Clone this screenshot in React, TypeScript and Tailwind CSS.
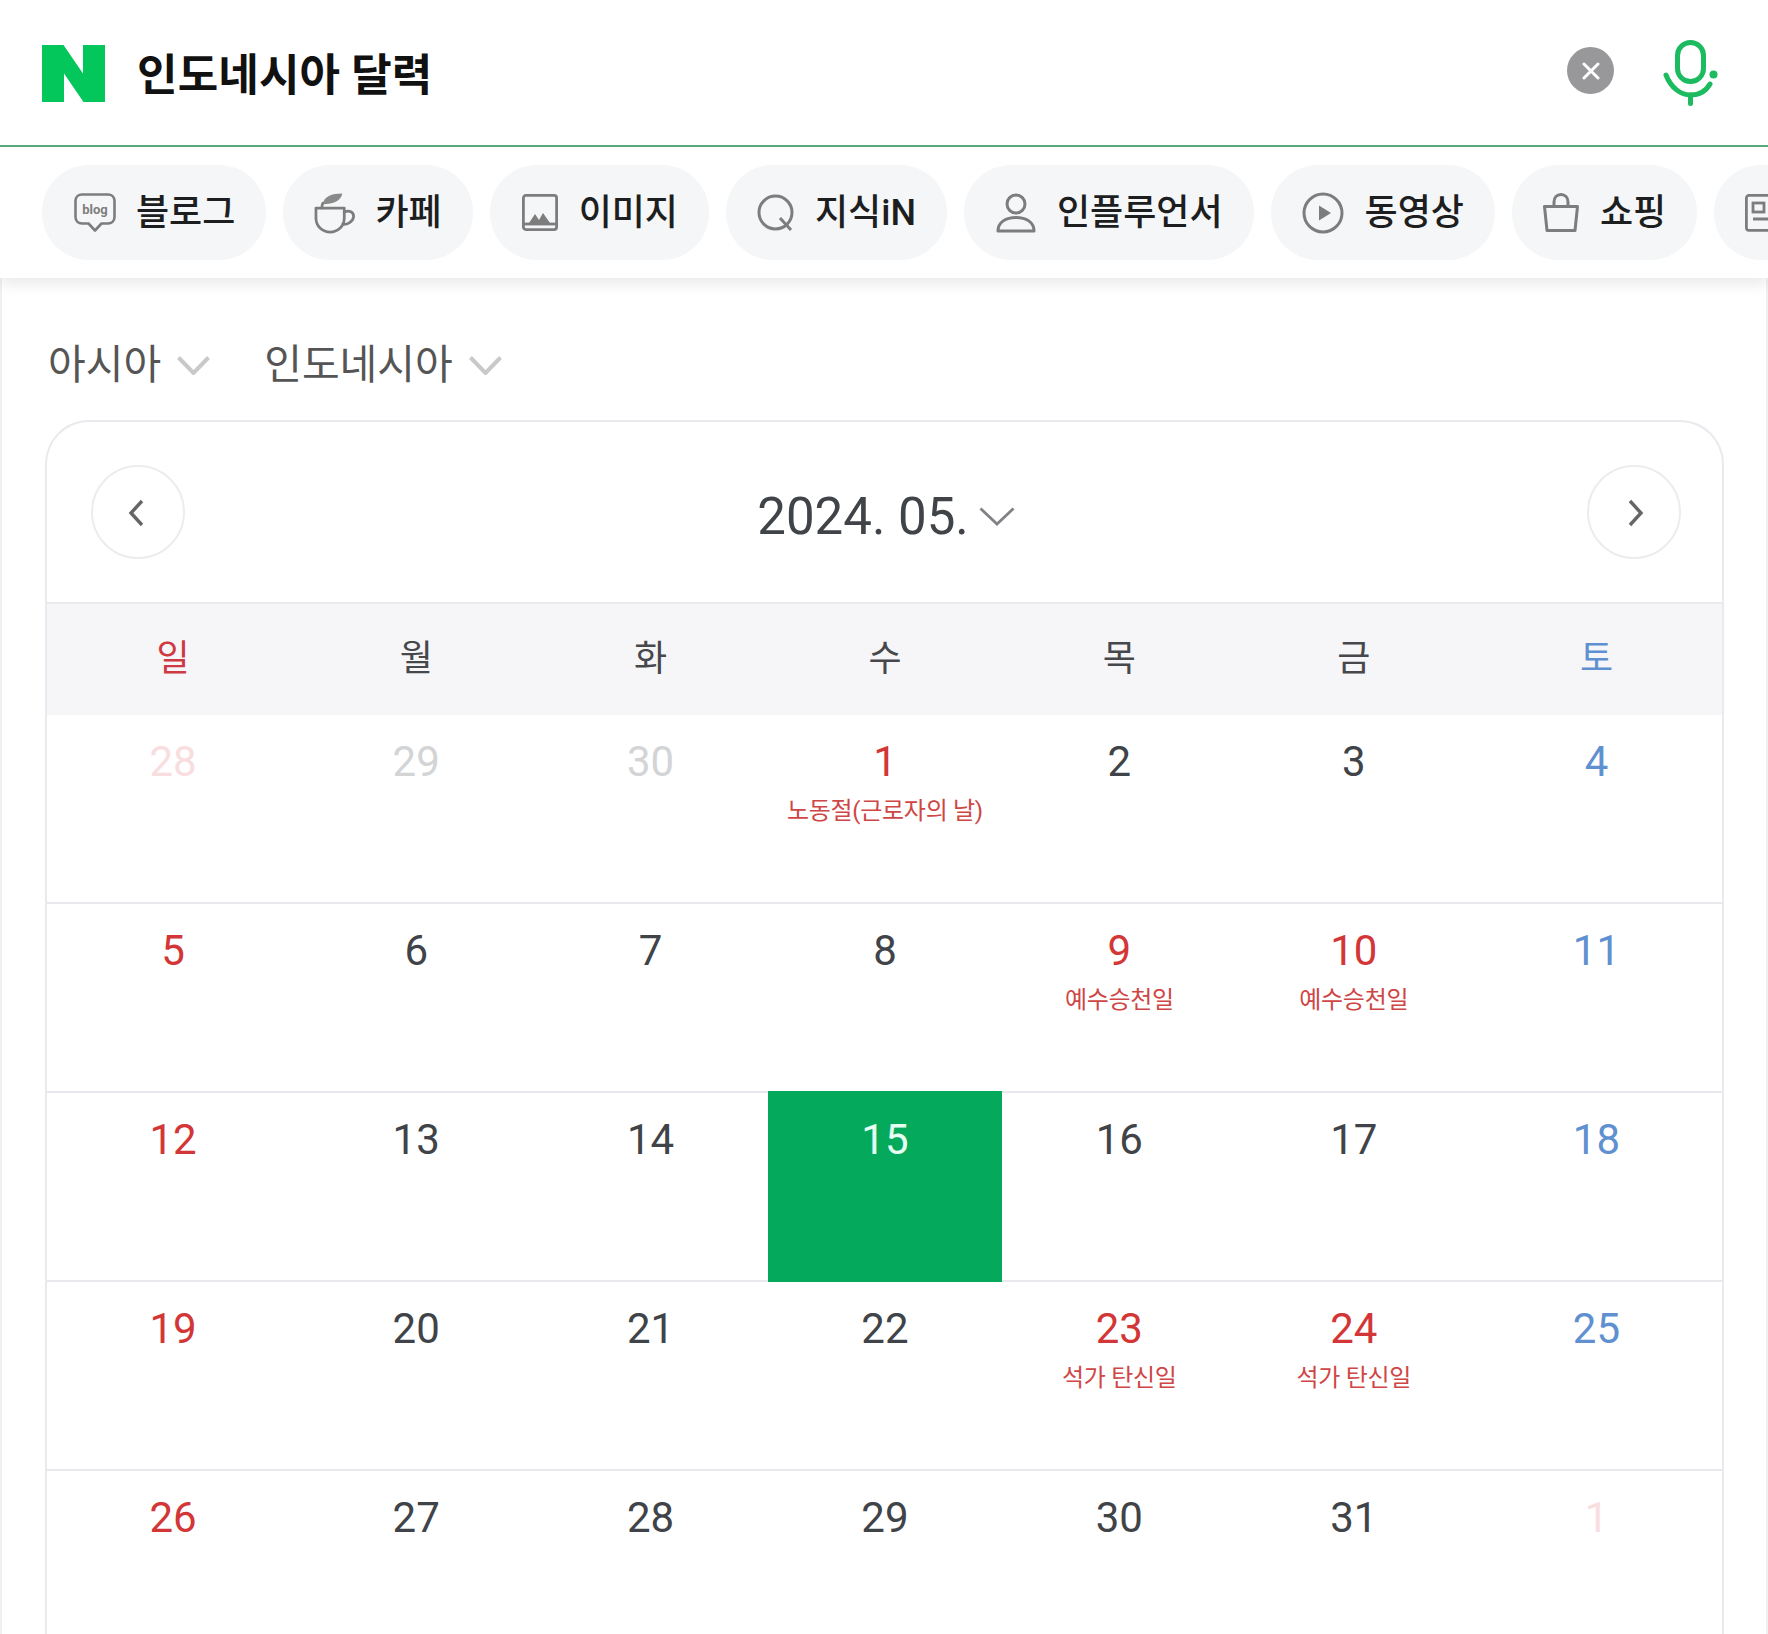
import { ReactNode } from 'react'

const iconGray = '#7d7d7d'

function BlogIcon() {
  return (
    <svg width="42" height="39" viewBox="0 0 42 39" fill="none" stroke={iconGray} strokeWidth="2.6" strokeLinejoin="round">
      <path d="M8 1.5H34C37.5 1.5 40.5 4 40.5 8V24C40.5 28 37.5 30.5 34 30.5H27.5L21 37.5L14.5 30.5H8C4.5 30.5 1.5 28 1.5 24V8C1.5 4 4.5 1.5 8 1.5Z" />
      <text x="21" y="20.5" textAnchor="middle" fontSize="13" fontWeight="700" fill={iconGray} stroke="none" fontFamily="Roboto, sans-serif">blog</text>
    </svg>
  )
}

function CafeIcon() {
  return (
    <svg width="42" height="42" viewBox="0 0 42 42" fill="none" stroke={iconGray} strokeWidth="2.8" strokeLinecap="round">
      <path d="M9 12C10 4 18 1 29 1C28 8 20 12 9 12Z" fill="#8a8a8a" stroke="none" />
      <path d="M9 11C8 13 8 14 8 16" />
      <path d="M2 16H31V26C31 35 24 40.5 16.5 40.5C9 40.5 2 35 2 26Z" strokeLinejoin="round" />
      <path d="M31 20C36 17.5 41 20 40.5 25C40 30 34 33 29.5 32.5" />
    </svg>
  )
}

function ImageIcon() {
  return (
    <svg width="36" height="37" viewBox="0 0 36 37" fill="none" stroke={iconGray} strokeWidth="2.8" strokeLinejoin="round">
      <rect x="1.4" y="1.4" width="33.2" height="34.2" rx="2.5" />
      <path d="M2 30H34" />
      <path d="M7 29L13 20L17 26L21 19L28 29Z" fill={iconGray} stroke="none" />
    </svg>
  )
}

function KinIcon() {
  return (
    <svg width="38" height="38" viewBox="0 0 38 38" fill="none" stroke={iconGray} strokeWidth="3">
      <circle cx="18.5" cy="18.5" r="16.5" />
      <path d="M23 24L34 36" />
    </svg>
  )
}

function PersonIcon() {
  return (
    <svg width="40" height="40" viewBox="0 0 40 40" fill="none" stroke={iconGray} strokeWidth="3" strokeLinejoin="round">
      <circle cx="20" cy="11" r="9" />
      <path d="M2 38C2 29 10 24.5 20 24.5C30 24.5 38 29 38 38Z" />
    </svg>
  )
}

function PlayIcon() {
  return (
    <svg width="42" height="42" viewBox="0 0 42 42" fill="none" stroke={iconGray} strokeWidth="3">
      <circle cx="21" cy="21" r="19" />
      <path d="M17 13.5L29 21L17 28.5Z" fill={iconGray} stroke="none" />
    </svg>
  )
}

function BagIcon() {
  return (
    <svg width="36" height="39" viewBox="0 0 36 39" fill="none" stroke={iconGray} strokeWidth="3" strokeLinejoin="round">
      <path d="M1.5 13.5H34.5L32 37.5H4Z" />
      <path d="M11 13V9C11 4.5 14 1.5 18 1.5C22 1.5 25 4.5 25 9V13" />
    </svg>
  )
}

function NewsIcon() {
  return (
    <svg width="42" height="38" viewBox="0 0 42 38" fill="none" stroke={iconGray} strokeWidth="2.8">
      <rect x="1.4" y="1.4" width="39" height="35" rx="2.5" />
      <rect x="8" y="9" width="11" height="9" />
      <path d="M25 10H35M25 17H35M8 25H35" />
    </svg>
  )
}

// icon box widths differ per chip in the original, hence the explicit classes
const chips: { label?: string; box: string; icon: ReactNode }[] = [
  { label: '블로그', box: 'w-[43px]', icon: <BlogIcon /> },
  { label: '카페', box: 'w-[41px]', icon: <CafeIcon /> },
  { label: '이미지', box: 'w-[38px]', icon: <ImageIcon /> },
  { label: '지식iN', box: 'w-[38px]', icon: <KinIcon /> },
  { label: '인플루언서', box: 'w-[42px]', icon: <PersonIcon /> },
  { label: '동영상', box: 'w-[43px]', icon: <PlayIcon /> },
  { label: '쇼핑', box: 'w-[37px]', icon: <BagIcon /> },
  { box: 'w-[42px]', icon: <NewsIcon /> },
]

type Tone = 'normal' | 'red' | 'blue' | 'mutedRed' | 'muted' | 'today'
type Day = { d: number; tone: Tone; label?: string }

const toneClass: Record<Tone, string> = {
  normal: 'text-[#404347]',
  red: 'text-[#d23636]',
  blue: 'text-[#5f90d0]',
  mutedRed: 'text-[#f8dedf]',
  muted: 'text-[#d3d4d6]',
  today: 'text-[#e6fff2]',
}

const weeks: Day[][] = [
  [
    { d: 28, tone: 'mutedRed' },
    { d: 29, tone: 'muted' },
    { d: 30, tone: 'muted' },
    { d: 1, tone: 'red', label: '노동절(근로자의 날)' },
    { d: 2, tone: 'normal' },
    { d: 3, tone: 'normal' },
    { d: 4, tone: 'blue' },
  ],
  [
    { d: 5, tone: 'red' },
    { d: 6, tone: 'normal' },
    { d: 7, tone: 'normal' },
    { d: 8, tone: 'normal' },
    { d: 9, tone: 'red', label: '예수승천일' },
    { d: 10, tone: 'red', label: '예수승천일' },
    { d: 11, tone: 'blue' },
  ],
  [
    { d: 12, tone: 'red' },
    { d: 13, tone: 'normal' },
    { d: 14, tone: 'normal' },
    { d: 15, tone: 'today' },
    { d: 16, tone: 'normal' },
    { d: 17, tone: 'normal' },
    { d: 18, tone: 'blue' },
  ],
  [
    { d: 19, tone: 'red' },
    { d: 20, tone: 'normal' },
    { d: 21, tone: 'normal' },
    { d: 22, tone: 'normal' },
    { d: 23, tone: 'red', label: '석가 탄신일' },
    { d: 24, tone: 'red', label: '석가 탄신일' },
    { d: 25, tone: 'blue' },
  ],
  [
    { d: 26, tone: 'red' },
    { d: 27, tone: 'normal' },
    { d: 28, tone: 'normal' },
    { d: 29, tone: 'normal' },
    { d: 30, tone: 'normal' },
    { d: 31, tone: 'normal' },
    { d: 1, tone: 'mutedRed' },
  ],
]

const weekdays = ['일', '월', '화', '수', '목', '금', '토']

function Chevron({ color, w, h, sw }: { color: string; w: number; h: number; sw: number }) {
  return (
    <svg width={w} height={h} viewBox={`0 0 ${w} ${h}`} fill="none" stroke={color} strokeWidth={sw}>
      <path d={`M1.5 1.5L${w / 2} ${h - 2}L${w - 1.5} 1.5`} />
    </svg>
  )
}

export default function App() {
  return (
    <div className="h-[1634px] overflow-hidden bg-white [font-family:Roboto,'Noto_Sans_CJK_KR',sans-serif]">
      <div className="relative z-10 bg-white shadow-[0_6px_14px_rgba(0,0,0,0.09)]">
        <header className="flex h-[147px] items-center border-b-2 border-[#5aa87c] pl-[42px] pr-[50px]">
          <svg width="63" height="57" viewBox="0 0 63 57" className="mt-[2px]">
            <path d="M0 0H21.5L41 28.5V0H63V57H41.5L22 28.5V57H0Z" fill="#03c75a" />
          </svg>
          <h1 className="ml-[32px] mt-[6px] text-[44px] font-bold leading-none tracking-[0.15px] text-[#111]">인도네시아 달력</h1>
          <div className="ml-auto flex items-center gap-[49px]">
            <button className="mb-[4px] flex h-[47px] w-[47px] items-center justify-center rounded-full bg-[#98989a]">
              <svg width="18" height="18" viewBox="0 0 18 18" stroke="#fff" strokeWidth="3" strokeLinecap="round">
                <path d="M2 2L16 16M16 2L2 16" />
              </svg>
            </button>
            <svg width="55" height="66" viewBox="0 0 55 66" fill="none" stroke="#1dbb5f" strokeWidth="5" strokeLinecap="round">
              <rect x="14.5" y="2.5" width="26" height="39" rx="13" />
              <path d="M3 35C8 48 18 55 27.5 55C36 55 43 51 47 44" />
              <path d="M27.5 55V63.5" />
              <circle cx="50.5" cy="34.5" r="4" fill="#1dbb5f" stroke="none" />
            </svg>
          </div>
        </header>
        <nav className="flex gap-[17px] overflow-hidden py-[18px] pl-[42px]">
          {chips.map((chip, i) => (
            <div key={i} className="flex h-[95px] flex-none items-center gap-[20px] rounded-[47px] bg-[#f5f6f8] px-[31px]">
              <span className={`flex items-center justify-center ${chip.box}`}>{chip.icon}</span>
              {chip.label && <span className="text-[36px] font-medium leading-none text-[#1d1e20]">{chip.label}</span>}
            </div>
          ))}
        </nav>
      </div>

      <main className="h-[1356px] border-x-2 border-[#f0f0f0]">
        <div className="flex h-[142px] items-center pl-[46px] pt-[32px] text-[41px] leading-none text-[#555]">
          <span>아시아</span>
          <span className="ml-[16px]"><Chevron color="#c9c9c9" w={33} h={19} sw={4} /></span>
          <span className="ml-[54px]">인도네시아</span>
          <span className="ml-[16px]"><Chevron color="#c9c9c9" w={33} h={19} sw={4} /></span>
        </div>

        <section className="ml-[43px] mr-[42px] h-[1214px] rounded-t-[44px] border-x-2 border-t-2 border-[#e9eaed]">
          <div className="flex h-[180px] items-center justify-between pl-[44px] pr-[41px]">
            <button className="flex h-[94px] w-[94px] items-center justify-center rounded-full border-2 border-[#ececee] pr-[4px] pt-[1px]">
              <svg width="18" height="28" viewBox="0 0 18 28" fill="none" stroke="#666" strokeWidth="3.4">
                <path d="M15 2L4 14L15 26" />
              </svg>
            </button>
            <div className="flex items-center gap-[10px] pt-[8px]">
              <span className="text-[51px] leading-none text-[#404347]">2024. 05.</span>
              <Chevron color="#808285" w={36} h={19} sw={2.8} />
            </div>
            <button className="flex h-[94px] w-[94px] items-center justify-center rounded-full border-2 border-[#ececee] pl-[4px] pt-[1px]">
              <svg width="18" height="28" viewBox="0 0 18 28" fill="none" stroke="#666" strokeWidth="3.4">
                <path d="M3 2L14 14L3 26" />
              </svg>
            </button>
          </div>

          <div className="grid h-[113px] grid-cols-[252px_repeat(5,234.4px)_251px] items-center border-t-2 border-[#e9eaee] bg-[#f6f6f9] pb-[2px] text-center text-[36px] leading-none text-[#46484c]">
            {weekdays.map((w, i) => (
              <span key={w} className={i === 0 ? 'text-[#cf3a42]' : i === 6 ? 'text-[#5f90d0]' : ''}>{w}</span>
            ))}
          </div>

          {weeks.map((week, i) => (
            <div key={i} className="grid h-[189px] grid-cols-[252px_repeat(5,234.4px)_251px] border-b-2 border-[#e8e9ec] text-center">
              {week.map((day) => (
                <div
                  key={`${i}-${day.d}`}
                  className={day.tone === 'today' ? '-mb-[2px] -mt-[2px] bg-[#05a95c] pt-[24px]' : 'pt-[22px]'}
                >
                  <div className={`text-[42px] leading-[50px] ${toneClass[day.tone]}`}>{day.d}</div>
                  {day.label && (
                    <div className="mt-[7px] text-[24px] leading-[34px] tracking-[-0.3px] text-[#cf4646]">{day.label}</div>
                  )}
                </div>
              ))}
            </div>
          ))}
        </section>
      </main>
    </div>
  )
}
